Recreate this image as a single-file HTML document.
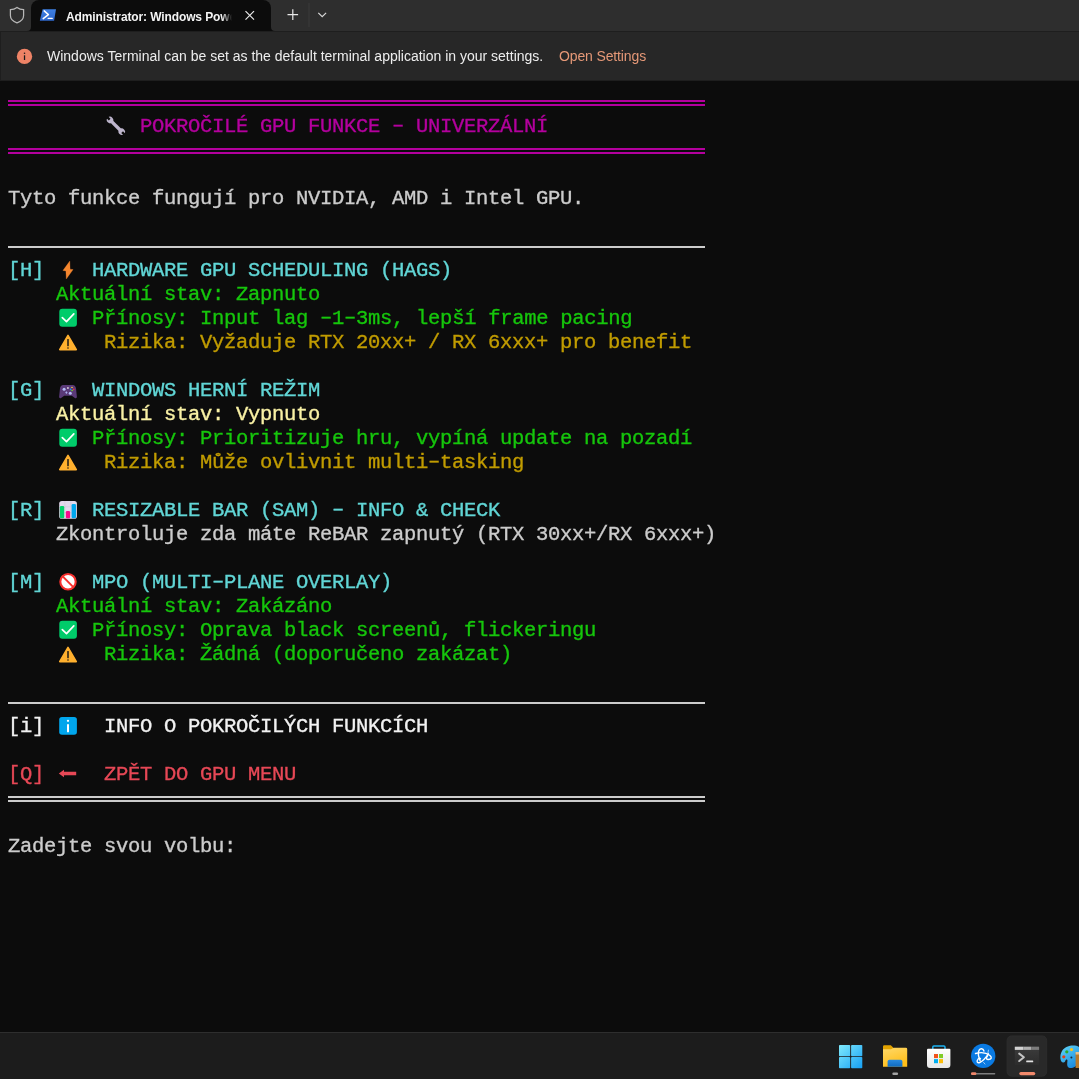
<!DOCTYPE html>
<html><head><meta charset="utf-8">
<style>
*{margin:0;padding:0;box-sizing:border-box}
html,body{width:1079px;height:1079px;overflow:hidden;background:#0C0C0C}
body{position:relative;font-family:"Liberation Sans",sans-serif}
#tabbar{position:absolute;left:0;top:0;width:1079px;height:31px;background:#2E2E2E}
#tab{position:absolute;left:31px;top:0;width:240px;height:32px;background:#0C0C0C;border-radius:8px 8px 0 0}
#strip{position:absolute;left:0;top:31px;width:1079px;height:1px;background:#1F1F1F}
#info{position:absolute;left:0;top:31px;width:1079px;height:50px;background:#272727;border:1px solid #1E1E1E;border-right:0}
#term{position:absolute;left:0;top:81px;width:1079px;height:951px;background:#0C0C0C}
.r{position:absolute;left:8px;height:24px;white-space:pre;font-family:"Liberation Mono",monospace;font-size:20.5px;letter-spacing:-0.3px;line-height:28px;will-change:transform;-webkit-text-stroke:0.35px currentColor}
.d{position:relative;top:-1px}
.cy{color:#61D6D6}.gr{color:#16C60C}.ye{color:#C19C00}.by{color:#F9F1A5}.wh{color:#CCCCCC}.bw{color:#F2F2F2}.rd{color:#E74856}.mg{color:#B4009E}
.dl{position:absolute;left:8px;width:697px;height:2px}
.e{position:absolute}
#ttl{will-change:transform;position:absolute;left:66px;top:6px;width:166px;height:22px;overflow:hidden;white-space:pre;font-size:12px;font-weight:bold;letter-spacing:-0.12px;line-height:22px;color:#F4F4F4;-webkit-mask-image:linear-gradient(90deg,#000 156px,transparent 166px)}
#msg{will-change:transform;position:absolute;left:47px;top:46px;white-space:pre;font-size:14px;line-height:20px;color:#EDEDED}
#open{will-change:transform;position:absolute;left:559px;top:46px;white-space:pre;font-size:14px;letter-spacing:-0.13px;line-height:20px;color:#E59877}
#taskbar{position:absolute;left:0;top:1032px;width:1079px;height:47px;background:#1C1C1C;border-top:1px solid #2E2E2E}
</style></head><body>
<div id="tabbar"></div>
<div id="tab"></div>
<svg style="position:absolute;left:0;top:0" width="340" height="32" viewBox="0 0 340 32">
 <path d="M17 7.4 C19 9 21.5 9.6 23.6 9.6 V15.6 C23.6 19.2 20.8 21.6 17 22.9 C13.2 21.6 10.4 19.2 10.4 15.6 V9.6 C12.5 9.6 15 9 17 7.4 Z" fill="none" stroke="#B8B8B8" stroke-width="1.25"/>
 <path d="M26 31 H27 A4 4 0 0 0 31 27 V31 Z" fill="#0C0C0C"/>
 <path d="M275 31 H271 V27 A4 4 0 0 0 275 31 Z" fill="#0C0C0C"/>
 <defs><linearGradient id="psg" x1="0" y1="0" x2="0" y2="1"><stop offset="0" stop-color="#3E80E4"/><stop offset="1" stop-color="#2D67CC"/></linearGradient></defs>
 <path d="M42.6 9.3 H56 L54.1 20.7 H39.8 Z" fill="url(#psg)"/>
 <path d="M44.2 10.9 L48.4 14.6 L43.2 18.6" fill="none" stroke="#fff" stroke-width="1.5" stroke-linecap="round" stroke-linejoin="round"/>
 <path d="M48.2 18.4 H52.2" stroke="#fff" stroke-width="1.4" stroke-linecap="round"/>
 <path d="M245.5 11.2 L254 19.7 M254 11.2 L245.5 19.7" stroke="#E8E8E8" stroke-width="1.2"/>
 <path d="M292.8 9.3 V20 M287.5 14.65 H298.1" stroke="#E8E8E8" stroke-width="1.2"/>
 <path d="M309 3 V27" stroke="#3A3A3A" stroke-width="1"/>
 <path d="M318.3 12.8 L322.2 16.7 L326.1 12.8" fill="none" stroke="#D8D8D8" stroke-width="1.2"/>
</svg>
<div id="ttl">Administrator: Windows Powe</div>
<div id="strip"></div>
<div id="info"></div>
<svg style="position:absolute;left:16px;top:48px" width="17" height="17" viewBox="0 0 17 17">
 <circle cx="8.5" cy="8.4" r="7.7" fill="#EE8366"/>
 <rect x="7.9" y="7.3" width="1.25" height="4.7" fill="#1a1a1a"/>
 <circle cx="8.52" cy="5.3" r="0.8" fill="#1a1a1a"/>
</svg>
<div id="msg">Windows Terminal can be set as the default terminal application in your settings.</div>
<div id="open">Open Settings</div>
<div id="term"></div>

<!-- rows: top = 89 + 24*row -->
<!-- row0 double magenta -->
<div class="dl" style="top:100px;background:#B4009E"></div>
<div class="dl" style="top:104px;background:#B4009E"></div>
<div class="r mg" style="top:113px">           POKROČILÉ GPU FUNKCE <span class="d">–</span> UNIVERZÁLNÍ</div>
<div class="dl" style="top:148px;background:#B4009E"></div>
<div class="dl" style="top:152px;background:#B4009E"></div>
<div class="r wh" style="top:185px">Tyto funkce fungují pro NVIDIA, AMD i Intel GPU.</div>
<div class="dl" style="top:246px;background:#CCCCCC"></div>

<div class="r cy" style="top:257px">[H]    HARDWARE GPU SCHEDULING (HAGS)</div>
<div class="r gr" style="top:281px">    Aktuální stav: Zapnuto</div>
<div class="r gr" style="top:305px">       Přínosy: Input lag <span class="d">–</span>1<span class="d">–</span>3ms, lepší frame pacing</div>
<div class="r ye" style="top:329px">        Rizika: Vyžaduje RTX 20xx+ / RX 6xxx+ pro benefit</div>

<div class="r cy" style="top:377px">[G]    WINDOWS HERNÍ REŽIM</div>
<div class="r by" style="top:401px">    Aktuální stav: Vypnuto</div>
<div class="r gr" style="top:425px">       Přínosy: Prioritizuje hru, vypíná update na pozadí</div>
<div class="r ye" style="top:449px">        Rizika: Může ovlivnit multi<span class="d">–</span>tasking</div>

<div class="r cy" style="top:497px">[R]    RESIZABLE BAR (SAM) <span class="d">–</span> INFO &amp; CHECK</div>
<div class="r wh" style="top:521px">    Zkontroluje zda máte ReBAR zapnutý (RTX 30xx+/RX 6xxx+)</div>

<div class="r cy" style="top:569px">[M]    MPO (MULTI<span class="d">–</span>PLANE OVERLAY)</div>
<div class="r gr" style="top:593px">    Aktuální stav: Zakázáno</div>
<div class="r gr" style="top:617px">       Přínosy: Oprava black screenů, flickeringu</div>
<div class="r gr" style="top:641px">        Rizika: Žádná (doporučeno zakázat)</div>

<div class="dl" style="top:702px;background:#CCCCCC"></div>
<div class="r bw" style="top:713px">[i]     INFO O POKROČILÝCH FUNKCÍCH</div>
<div class="r rd" style="top:761px">[Q]     ZPĚT DO GPU MENU</div>
<div class="dl" style="top:796px;background:#CCCCCC"></div>
<div class="dl" style="top:800px;background:#CCCCCC"></div>
<div class="r wh" style="top:833px">Zadejte svou volbu:</div>


<!-- emoji -->
<svg class="e" style="left:104px;top:113px" width="24" height="24" viewBox="0 0 24 24">
 <defs><mask id="wm"><rect width="24" height="24" fill="#fff"/>
 <g transform="translate(11.9 12.85) rotate(45)"><rect x="-13" y="-1.2" width="4.2" height="2.4" fill="#000"/><rect x="8.8" y="-1.2" width="4.2" height="2.4" fill="#000"/></g></mask></defs>
 <g mask="url(#wm)" fill="#BDB5CC"><g transform="translate(11.9 12.85) rotate(45)"><rect x="-7" y="-1.7" width="14" height="3.4"/><circle cx="-8.3" cy="0" r="3.2"/><circle cx="8.3" cy="0" r="3.2"/></g></g>
</svg>
<svg class="e" style="left:56px;top:257px" width="24" height="24" viewBox="0 0 24 24">
 <path d="M13.8 4.1 L6.9 13.5 L9.9 13.9 L10.3 22 L17.1 12.6 L14.1 12.2 Z" fill="#F5862E" stroke="#F5862E" stroke-width="0.3" stroke-linejoin="round"/>
</svg>
<svg class="e" style="left:56px;top:305px" width="24" height="24" viewBox="0 0 24 24">
 <rect x="3.3" y="3.8" width="17.6" height="17.9" rx="3" fill="#00CC6A"/>
 <path d="M6.3 12.6 L10.5 16.6 L17.8 8.9" fill="none" stroke="#fff" stroke-width="1.7" stroke-linecap="round" stroke-linejoin="round"/>
</svg>
<svg class="e" style="left:56px;top:329px" width="24" height="24" viewBox="0 0 24 24">
 <path d="M12 6.4 L20.3 20.6 H3.7 Z" fill="#FFB02E" stroke="#FFB02E" stroke-width="1.6" stroke-linejoin="round"/>
 <rect x="11.25" y="9.9" width="1.5" height="7.4" rx="0.6" fill="#1E1A14"/>
 <rect x="11.25" y="18.3" width="1.5" height="1.4" rx="0.6" fill="#1E1A14"/>
</svg>
<svg class="e" style="left:56px;top:425px" width="24" height="24" viewBox="0 0 24 24">
 <rect x="3.3" y="3.8" width="17.6" height="17.9" rx="3" fill="#00CC6A"/>
 <path d="M6.3 12.6 L10.5 16.6 L17.8 8.9" fill="none" stroke="#fff" stroke-width="1.7" stroke-linecap="round" stroke-linejoin="round"/>
</svg>
<svg class="e" style="left:56px;top:449px" width="24" height="24" viewBox="0 0 24 24">
 <path d="M12 6.4 L20.3 20.6 H3.7 Z" fill="#FFB02E" stroke="#FFB02E" stroke-width="1.6" stroke-linejoin="round"/>
 <rect x="11.25" y="9.9" width="1.5" height="7.4" rx="0.6" fill="#1E1A14"/>
 <rect x="11.25" y="18.3" width="1.5" height="1.4" rx="0.6" fill="#1E1A14"/>
</svg>
<svg class="e" style="left:56px;top:617px" width="24" height="24" viewBox="0 0 24 24">
 <rect x="3.3" y="3.8" width="17.6" height="17.9" rx="3" fill="#00CC6A"/>
 <path d="M6.3 12.6 L10.5 16.6 L17.8 8.9" fill="none" stroke="#fff" stroke-width="1.7" stroke-linecap="round" stroke-linejoin="round"/>
</svg>
<svg class="e" style="left:56px;top:641px" width="24" height="24" viewBox="0 0 24 24">
 <path d="M12 6.4 L20.3 20.6 H3.7 Z" fill="#FFB02E" stroke="#FFB02E" stroke-width="1.6" stroke-linejoin="round"/>
 <rect x="11.25" y="9.9" width="1.5" height="7.4" rx="0.6" fill="#1E1A14"/>
 <rect x="11.25" y="18.3" width="1.5" height="1.4" rx="0.6" fill="#1E1A14"/>
</svg>
<svg class="e" style="left:56px;top:377px" width="24" height="24" viewBox="0 0 24 24">
 <path d="M7.2 8 H16.8 C18.6 8 19.6 9.4 20 11.3 L20.9 19.8 C21 21 19.9 21.6 18.9 20.9 L15.8 18.8 H8.2 L5.1 20.9 C4.1 21.6 3 21 3.1 19.8 L4 11.3 C4.4 9.4 5.4 8 7.2 8 Z" fill="#5A3A78"/>
 <circle cx="8.1" cy="12.3" r="1.5" fill="#B4BDF5"/>
 <rect x="11" y="10.1" width="1.8" height="1.8" fill="#C8BCCB"/>
 <path d="M10.4 14.3 L11.6 15.6 L10.4 16.9 L9.2 15.6 Z" fill="#AAB0EE"/>
 <circle cx="14.3" cy="16.3" r="1.5" fill="#B4BDF5"/>
 <ellipse cx="16" cy="10.4" rx="1" ry="0.7" fill="#E2B940"/>
 <circle cx="14.6" cy="12.4" r="0.8" fill="#1C9CE8"/>
 <circle cx="17.7" cy="12.4" r="0.8" fill="#F8312F"/>
 <ellipse cx="16.1" cy="13.5" rx="1" ry="0.7" fill="#6FBF3A"/>
</svg>
<svg class="e" style="left:56px;top:497px" width="24" height="24" viewBox="0 0 24 24">
 <rect x="3.2" y="3.9" width="17.7" height="17.9" rx="2.6" fill="#E1D8EC"/>
 <path d="M8.9 4 V21.7 M14.9 4 V21.7 M3.3 9.8 H20.8 M3.3 15.8 H20.8" stroke="#CDC4D6" stroke-width="0.6"/>
 <rect x="3.9" y="9" width="4.3" height="12.3" rx="1.2" fill="#00D26A"/>
 <rect x="9.9" y="14" width="4.2" height="7.3" rx="1.2" fill="#F70A8D"/>
 <rect x="15.6" y="7" width="4.4" height="14.3" rx="1.2" fill="#00A6ED"/>
</svg>
<svg class="e" style="left:56px;top:569px" width="24" height="24" viewBox="0 0 24 24">
 <circle cx="12" cy="12.75" r="7.7" fill="#fff" stroke="#F8312F" stroke-width="2.1"/>
 <path d="M6.7 7.4 L17.3 18.1" stroke="#F8312F" stroke-width="2"/>
</svg>
<svg class="e" style="left:56px;top:713px" width="24" height="24" viewBox="0 0 24 24">
 <rect x="3.2" y="3.9" width="17.7" height="17.9" rx="2.8" fill="#00A6ED"/>
 <circle cx="12" cy="7.8" r="1.15" fill="#fff"/>
 <rect x="11" y="11" width="2" height="8.3" rx="0.9" fill="#fff"/>
</svg>
<svg class="e" style="left:56px;top:761px" width="24" height="24" viewBox="0 0 24 24">
 <path d="M2.8 12.5 L8 8.8 V10.8 H20.2 V14.2 H8 V16.2 Z" fill="#E74856"/>
</svg>
<div id="taskbar"></div>
<svg style="position:absolute;left:0;top:1032px" width="1079" height="47" viewBox="0 1032 1079 47">
 <defs>
  <linearGradient id="wg" gradientUnits="userSpaceOnUse" x1="839" y1="1045" x2="862" y2="1068"><stop offset="0" stop-color="#80EAFC"/><stop offset="1" stop-color="#17A0F4"/></linearGradient>
  <linearGradient id="fy" x1="0" y1="0" x2="0.4" y2="1"><stop offset="0" stop-color="#FFD96A"/><stop offset="1" stop-color="#FFBE1A"/></linearGradient>
  <linearGradient id="fb" x1="0" y1="0" x2="0" y2="1"><stop offset="0" stop-color="#2A8BDF"/><stop offset="1" stop-color="#0F6AC0"/></linearGradient>
  <linearGradient id="sb" x1="0" y1="0" x2="0" y2="1"><stop offset="0" stop-color="#FFFFFF"/><stop offset="1" stop-color="#E6E6E6"/></linearGradient>
  <linearGradient id="tg" x1="0" y1="0" x2="0" y2="1"><stop offset="0" stop-color="#3C3C3C"/><stop offset="1" stop-color="#2C2C2C"/></linearGradient>
  <linearGradient id="pg" x1="0" y1="0" x2="0.6" y2="1"><stop offset="0" stop-color="#62D8F8"/><stop offset="1" stop-color="#1B8CE0"/></linearGradient>
 </defs>
 <!-- windows logo -->
 <rect x="839" y="1045" width="11.2" height="11.2" rx="0.8" fill="url(#wg)"/>
 <rect x="851.1" y="1045" width="11.2" height="11.2" rx="0.8" fill="url(#wg)"/>
 <rect x="839" y="1057" width="11.2" height="11.2" rx="0.8" fill="url(#wg)"/>
 <rect x="851.1" y="1057" width="11.2" height="11.2" rx="0.8" fill="url(#wg)"/>
 <!-- folder -->
 <path d="M883 1046.6 Q883 1045.3 884.3 1045.3 H890.8 L893.2 1047.6 V1050 H883 Z" fill="#E3A300"/>
 <path d="M883 1049.2 L891 1049.2 L893.6 1047.7 H905.9 Q907.2 1047.7 907.2 1049 V1066.7 H883 Z" fill="url(#fy)"/>
 <path d="M887.6 1066.7 V1061.5 Q887.6 1059.7 889.4 1059.7 H900.6 Q902.4 1059.7 902.4 1061.5 V1066.7 Z" fill="url(#fb)"/>
 <rect x="892.3" y="1072.4" width="5.8" height="2.5" rx="1.25" fill="#A3A3A3"/>
 <!-- store -->
 <path d="M932.8 1050.5 V1047 Q932.8 1045.9 933.9 1045.9 H943.9 Q945 1045.9 945 1047 V1050.5" fill="none" stroke="#1DB2F2" stroke-width="1.5"/>
 <path d="M928 1048.8 H949.4 Q950.4 1048.8 950.4 1049.8 V1065 Q950.4 1068 947.4 1068 H930 Q927 1068 927 1065 V1049.8 Q927 1048.8 928 1048.8 Z" fill="url(#sb)"/>
 <rect x="934" y="1054" width="4" height="4.1" fill="#F1511B"/>
 <rect x="939" y="1054" width="4" height="4.1" fill="#80CC28"/>
 <rect x="934" y="1059.1" width="4" height="4.1" fill="#00ADEF"/>
 <rect x="939" y="1059.1" width="4" height="4.1" fill="#FBBC09"/>
 <!-- battle.net -->
 <circle cx="983.2" cy="1055.9" r="12.2" fill="#0A7AE2"/>
 <g fill="none" stroke="#fff" stroke-width="50" stroke-linecap="round" transform="translate(968 1041) scale(0.027778)">
  <path d="M440 720 C390 600 350 420 400 330 C440 260 540 250 575 360"/>
  <path d="M270 450 C500 390 700 450 790 520 C870 590 850 660 730 665 C660 665 640 610 700 540"/>
  <path d="M735 460 C650 590 530 720 420 775 C340 805 300 740 350 670 C380 620 430 610 450 640"/>
  <path d="M735 330 L715 450 M560 770 L610 830" stroke-width="22"/>
 </g>
 <rect x="971" y="1073.1" width="24.3" height="1.3" rx="0.6" fill="#7E7E7E"/>
 <rect x="971" y="1072.3" width="5.4" height="2.7" rx="1.35" fill="#F0866A"/>
 <!-- terminal selected -->
 <rect x="1007.1" y="1035.9" width="39.6" height="40.3" rx="4.5" fill="#292929" stroke="#2F2F2F" stroke-width="0.8"/>
 <rect x="1014.8" y="1046.7" width="24.3" height="18.4" rx="0.8" fill="url(#tg)"/>
 <rect x="1014.8" y="1046.7" width="8.4" height="3.2" fill="#D2D2D2"/>
 <rect x="1023.2" y="1046.7" width="7.9" height="3.2" fill="#AFAFAF"/>
 <rect x="1031.1" y="1046.7" width="8" height="3.2" fill="#7C7C7C"/>
 <path d="M1019.2 1053.6 L1023.9 1057.2 L1019.2 1061" fill="none" stroke="#C4C4C4" stroke-width="2" stroke-linecap="round" stroke-linejoin="round"/>
 <rect x="1026.2" y="1060.5" width="7" height="1.8" rx="0.5" fill="#E2E2E2"/>
 <rect x="1019.3" y="1072" width="16" height="3.2" rx="1.6" fill="#F28A6C"/>
 <!-- paint -->
 <path d="M1079 1047 C1075 1044.5 1066 1045 1062 1051 C1059 1056 1060.5 1063 1063.5 1062.5 C1066 1062 1065 1059 1067 1059.5 C1068.5 1060 1065.5 1066 1069 1067.8 C1072 1069 1077 1066 1079 1063 Z" fill="url(#pg)"/>
 <circle cx="1063.8" cy="1056.8" r="1.6" fill="#E0401A"/>
 <circle cx="1066.8" cy="1051.8" r="1.6" fill="#2FA82A"/>
 <circle cx="1071.5" cy="1049.6" r="1.6" fill="#F8C21C"/>
 <circle cx="1071.4" cy="1057.4" r="1" fill="#1A2A3A"/>
 <rect x="1075.6" y="1052.5" width="3.4" height="15.5" fill="#B97A2A"/>
 <rect x="1075.6" y="1052" width="3.4" height="2.5" fill="#E8C08A"/>
</svg>
</body></html>
